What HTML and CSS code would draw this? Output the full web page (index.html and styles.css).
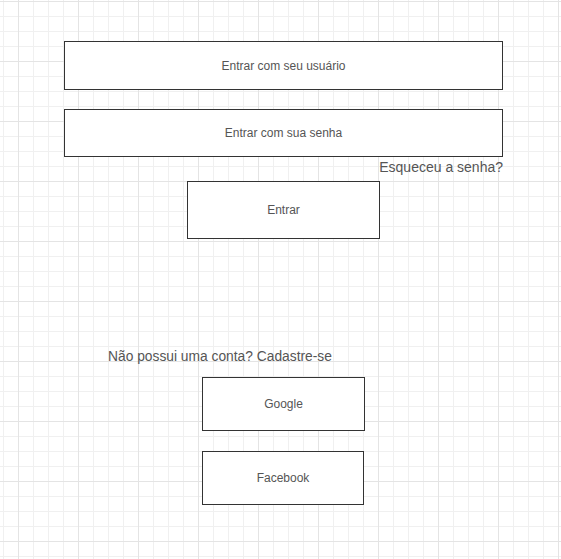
FILE: index.html
```html
<!DOCTYPE html>
<html lang="pt-BR">
<head>
<meta charset="utf-8">
<title>Login</title>
<link rel="stylesheet" href="styles.css">
</head>
<body>
<main class="page">
  <div class="field field-user">Entrar com seu usuário</div>
  <div class="field field-pass">Entrar com sua senha</div>
  <div class="forgot">Esqueceu a senha?</div>
  <div class="btn btn-enter">Entrar</div>
  <div class="signup">Não possui uma conta? Cadastre-se</div>
  <div class="btn btn-social btn-google">Google</div>
  <div class="btn btn-social btn-facebook">Facebook</div>
</main>
</body>
</html>
```
FILE: styles.css
```css
html, body {
  margin: 0;
  padding: 0;
  height: 100%;
}
body {
  min-height: 559px;
  background-color: #ffffff;
  background-image:
    linear-gradient(to right, #e4e4e4 1px, transparent 1px),
    linear-gradient(to bottom, #e4e4e4 1px, transparent 1px),
    linear-gradient(to right, #f0f0f0 1px, transparent 1px),
    linear-gradient(to bottom, #f0f0f0 1px, transparent 1px);
  background-size: 60px 60px, 60px 60px, 15px 15px, 15px 15px;
  background-position: 18px 0, 0 1px, 3px 0, 0 1px;
  font-family: "Liberation Sans", Arial, Helvetica, sans-serif;
  color: #555555;
}
.page {
  display: flex;
  flex-direction: column;
  align-items: flex-start;
  padding: 41px 0 0 64px;
  box-sizing: border-box;
}
.field, .btn {
  box-sizing: border-box;
  border: 1px solid #333333;
  background: #ffffff;
  display: flex;
  align-items: center;
  justify-content: center;
  font-size: 12px;
  color: #555555;
}
.field {
  width: 439px;
  height: 48px;
}
.field-user {
  height: 49px;
}
.field-pass {
  margin-top: 19px;
}
.forgot {
  width: 439px;
  text-align: right;
  font-size: 14px;
  line-height: 16px;
  margin-top: 2px;
}
.btn-enter {
  width: 193px;
  height: 58px;
  margin-top: 6px;
  margin-left: 123px;
}
.signup {
  font-size: 13.8px;
  line-height: 16px;
  margin-top: 110px;
  margin-left: 44px;
}
.btn-social {
  margin-left: 138px;
  height: 54px;
}
.btn-google {
  width: 163px;
  margin-top: 12px;
}
.btn-facebook {
  width: 162px;
  margin-top: 20px;
}
```
